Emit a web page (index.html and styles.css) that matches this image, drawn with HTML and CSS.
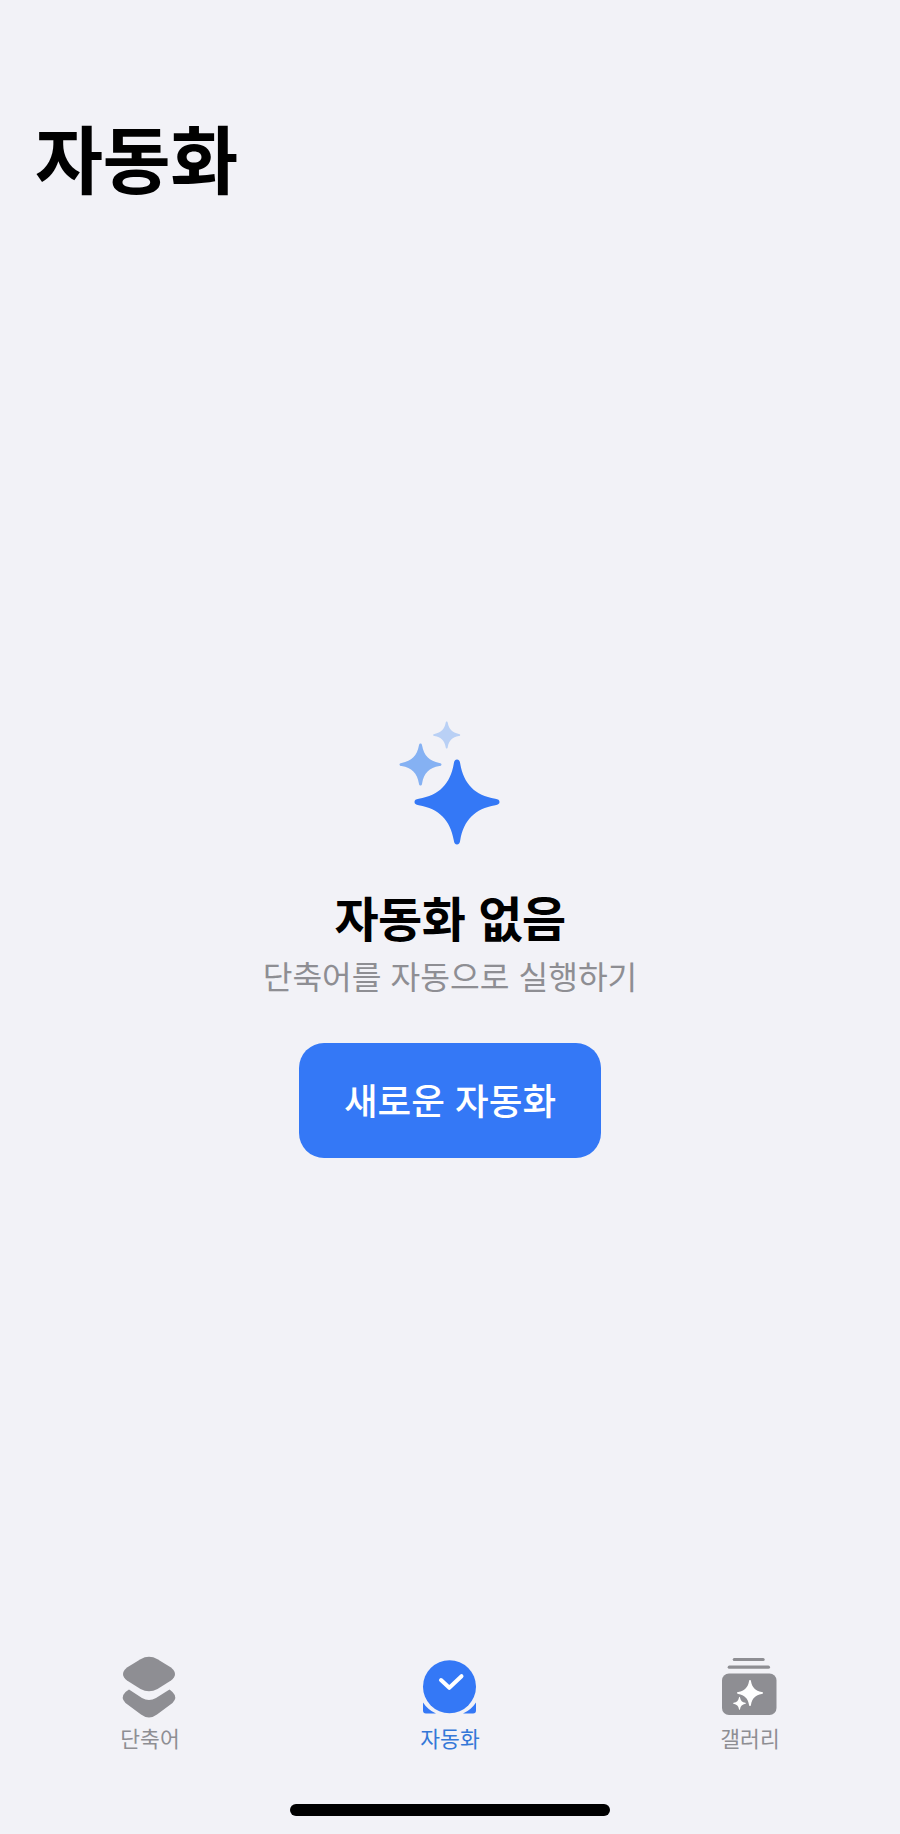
FILE: index.html
```html
<!DOCTYPE html>
<html lang="ko">
<head>
<meta charset="utf-8">
<title>자동화</title>
<link rel="stylesheet" href="styles.css">
</head>
<body>
<div class="screen">
  <h1 class="title">자동화</h1>
  <main class="empty">
    <svg class="hero" viewBox="0 0 160 160" aria-hidden="true">
      <defs>
        <path id="star" d="M0,-50 C2,-50 3.4,-48.5 3.8,-45 C8,-21 21,-8 45,-3.8 C48.5,-3.4 50,-2 50,0 C50,2 48.5,3.4 45,3.8 C21,8 8,21 3.8,45 C3.4,48.5 2,50 0,50 C-2,50 -3.4,48.5 -3.8,45 C-8,21 -21,8 -45,3.8 C-48.5,3.4 -50,2 -50,0 C-50,-2 -48.5,-3.4 -45,-3.8 C-21,-8 -8,-21 -3.8,-45 C-3.4,-48.5 -2,-50 0,-50Z"/>
      </defs>
      <use href="#star" transform="translate(87,102) scale(.85)" fill="#3478f6"/>
      <use href="#star" transform="translate(50.5,64.5) scale(.42)" fill="#85b1f3"/>
      <use href="#star" transform="translate(76.7,35) scale(.27)" fill="#b9d0f5"/>
    </svg>
    <h2 class="empty-heading">자동화 없음</h2>
    <p class="empty-sub">단축어를 자동으로 실행하기</p>
    <button class="cta" type="button">새로운 자동화</button>
  </main>
  <nav class="tabs">
    <div class="tab">
      <svg class="tab-icon" viewBox="0 0 120 88" aria-hidden="true">
        <path fill="#8e8e93" d="M50.5,19.2 Q59,14.5 67.5,19.2 L81,27.5 Q89,34 81,40.5 L67.5,49 Q59,53.5 50.5,49 L37,40.5 Q29,34 37,27.5 Z"/>
        <path fill="#8e8e93" d="M39,49.5 L52,58 Q59,62 66,58 L79.5,49.5 L82.5,52 Q88,57.5 82.5,63 L67,74.5 Q59,80.5 51,74.5 L35.5,63 Q30,57.5 35.5,52 Z"/>
      </svg>
      <span class="tab-label">단축어</span>
    </div>
    <div class="tab tab-active">
      <svg class="tab-icon" viewBox="0 0 120 88" aria-hidden="true">
        <circle cx="59.5" cy="46.7" r="26.5" fill="#3478f6"/>
        <path fill="#3478f6" d="M33,62.5 A30,30 0 0 0 46,73.5 L36,73.5 Q33,73.5 33,70.5 Z"/>
        <path fill="#3478f6" d="M86,62.5 A30,30 0 0 1 73,73.5 L83,73.5 Q86,73.5 86,70.5 Z"/>
        <path fill="none" stroke="#fff" stroke-width="4" stroke-linecap="round" stroke-linejoin="round" d="M51,40 L59.3,47.8 L71.5,36.2"/>
      </svg>
      <span class="tab-label">자동화</span>
    </div>
    <div class="tab">
      <svg class="tab-icon" viewBox="0 0 120 88" aria-hidden="true">
        <rect x="42.7" y="18" width="32" height="3" rx="1.5" fill="#8e8e93"/>
        <rect x="37.7" y="25.6" width="42.3" height="3.2" rx="1.6" fill="#8e8e93"/>
        <rect x="32" y="33.5" width="54.5" height="41.5" rx="7" fill="#8e8e93"/>
        <use href="#star" transform="translate(60,53) scale(.26)" fill="#fff"/>
        <use href="#star" transform="translate(49.5,63.3) scale(.13)" fill="#fff"/>
      </svg>
      <span class="tab-label">갤러리</span>
    </div>
  </nav>
  <div class="home-bar"></div>
</div>
</body>
</html>
```

FILE: styles.css
```css
* {
  box-sizing: border-box;
}

html,
body {
  margin: 0;
  height: 100%;
}

body {
  background: #f2f2f7;
  font-family: "Noto Sans CJK KR", "Noto Sans", sans-serif;
  color: #000;
}

.screen {
  display: flex;
  flex-direction: column;
  height: 1834px;
  padding-top: 116px;
}

.title {
  margin: 0;
  padding-left: 35px;
  font-size: 74px;
  line-height: 80px;
  font-weight: 700;
  letter-spacing: -0.5px;
}

.empty {
  display: flex;
  flex-direction: column;
  align-items: center;
  padding-top: 504px;
}

.hero {
  display: block;
  width: 160px;
  height: 160px;
}

.empty-heading {
  margin: 26px 0 0;
  font-size: 48px;
  line-height: 60px;
  font-weight: 700;
  letter-spacing: -0.5px;
}

.empty-sub {
  margin: 9px 0 0;
  font-size: 32.3px;
  line-height: 40px;
  font-weight: 400;
  color: #8e8e93;
}

.cta {
  width: 302px;
  height: 115px;
  margin-top: 48px;
  padding: 0 0 2px;
  border: 0;
  border-radius: 25px;
  background: #3478f6;
  color: #fff;
  font-family: inherit;
  font-size: 36.6px;
  font-weight: 500;
}

.tabs {
  display: grid;
  grid-template-columns: repeat(3, 1fr);
  margin-top: auto;
}

.tab {
  display: flex;
  flex-direction: column;
  align-items: center;
  color: #8e8e93;
}

.tab-active {
  color: #3478d8;
}

.tab-icon {
  display: block;
  width: 120px;
  height: 88px;
}

.tab-label {
  margin-top: -2px;
  font-size: 21.5px;
  line-height: 24px;
}

.home-bar {
  width: 320px;
  height: 12px;
  margin: 54px auto 18px;
  border-radius: 6px;
  background: #000;
}
```
